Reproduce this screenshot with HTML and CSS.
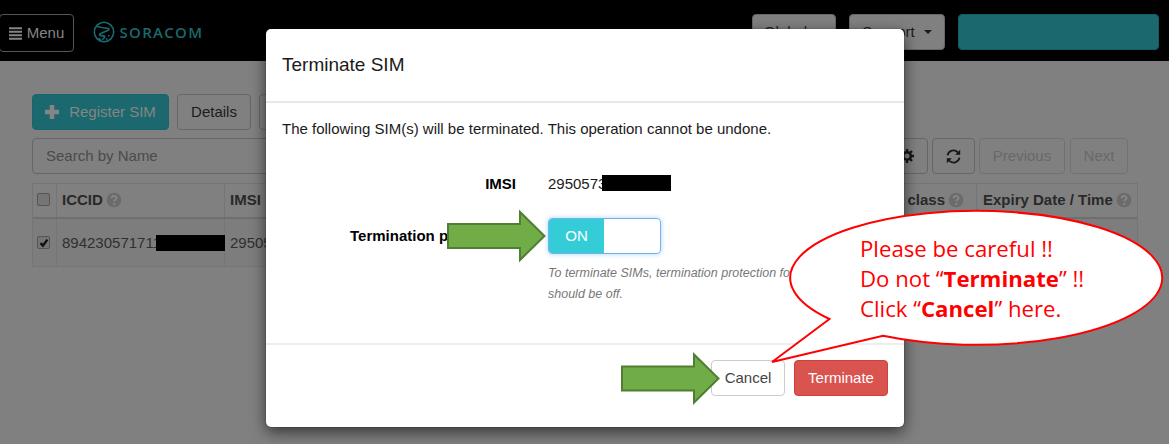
FILE: index.html
```html
<!DOCTYPE html>
<html lang="en">
<head>
<meta charset="utf-8">
<title>Terminate SIM</title>
<link rel="stylesheet" href="styles.css">
</head>
<body>
<svg class="defs" aria-hidden="true">
  <symbol id="help" viewBox="0 0 16 16"><circle cx="8" cy="8" r="7.3" fill="#6b6b6b"/><path d="M5.6 6.2C5.7 3.4 10.5 3.3 10.5 6c0 1.8-2.3 1.7-2.3 3.6M8.2 10.9v2" fill="none" stroke="#858585" stroke-width="2"/></symbol>
</svg>
<header class="topbar">
  <button class="btn menu"><svg width="13" height="13" viewBox="0 0 13 13"><path d="M0 1.200h13M0 4.700h13M0 8.200h13M0 11.700h13" stroke="#858585" stroke-width="2"/></svg><span>Menu</span></button>
  <div class="logo">
    <svg width="22" height="22" viewBox="0 0 22 22" fill="none" stroke="#1b696e" stroke-width="1.6"><circle cx="11" cy="11" r="9.7"/><path d="M4 5.500l3.500.8 7.500 1.200c1.300.3 1.300 1.200.2 1.800L7.300 12.700c-1.200.7-1 1.500.1 1.700l3.700.7c1 .3.8 1.100.1 1.700l-1.800 2M5.500 17l2.700 2.500"/><path d="M12.800 18h1.700M15 14.700h1.700"/></svg>
    <span>SORACOM</span>
  </div>
  <div class="account">
    <button class="btn global">Global <i class="caret"></i></button>
    <button class="btn support">Support <i class="caret"></i></button>
    <button class="btn user"></button>
  </div>
</header>
<main class="page">
  <div class="actions">
    <button class="btn register"><svg width="14" height="14" viewBox="0 0 14 14"><path d="M7 0v14M0 7h14" stroke="#858585" stroke-width="4.400"/></svg><span>Register SIM</span></button>
    <button class="btn details">Details</button>
    <button class="btn more"></button>
  </div>
  <div class="filters">
    <div class="search">Search by Name</div>
    <button class="btn gear"><svg width="14" height="14" viewBox="0 0 14 14" fill="none" stroke="#161616"><circle cx="7" cy="7" r="3.800" stroke-width="2.600"/><path d="M7 0v2.500M7 11.500V14M0 7h2.500M11.500 7H14M2 2l2 2M10 10l2 2M2 12l2-2M10 4l2-2" stroke-width="2.300"/></svg></button>
    <button class="btn refresh"><svg width="15" height="15" viewBox="0 0 15 15"><path d="M1.500 6.300A6 6 0 0 1 11.900 3.500M13.500 8.700A6 6 0 0 1 3.100 11.500" fill="none" stroke="#161616" stroke-width="1.700"/><path d="M14.200.7v5H9.200zM.8 14.300v-5h5z" fill="#161616"/></svg></button>
    <button class="btn previous">Previous</button>
    <button class="btn next">Next</button>
  </div>
  <div class="table">
    <div class="row head">
      <div class="cell"><span class="check"></span></div>
      <div class="cell">ICCID <svg class="help"><use href="#help"/></svg></div>
      <div class="cell">IMSI</div>
      <div class="cell right">Speed class <svg class="help"><use href="#help"/></svg></div>
      <div class="cell">Expiry Date / Time <svg class="help"><use href="#help"/></svg></div>
    </div>
    <div class="row body">
      <div class="cell"><span class="check"><svg width="12" height="12" viewBox="0 0 12 12"><path d="M2.500 6.200l2.400 2.500L9.400 2.600" fill="none" stroke="#101010" stroke-width="2.400"/></svg></span></div>
      <div class="cell iccid"><span class="digits">894230571711</span><span class="redact"></span></div>
      <div class="cell">295057</div>
      <div class="cell"></div>
      <div class="cell"></div>
    </div>
  </div>
</main>
<section class="modal">
  <h1 class="title">Terminate SIM</h1>
  <div class="content">
    <p class="warning">The following SIM(s) will be terminated. This operation cannot be undone.</p>
    <div class="field imsi"><b>IMSI</b><span class="value"><span class="digits">2950573</span><span class="redact"></span></span></div>
    <div class="field protection"><b>Termination p</b><div class="toggle"><span>ON</span></div></div>
    <p class="hint">To terminate SIMs, termination protection for<br>should be off.</p>
  </div>
  <footer class="footer"><button class="btn cancel">Cancel</button><button class="btn terminate">Terminate</button></footer>
</section>
<svg class="marks" width="1169" height="444" viewBox="0 0 1169 444">
  <g fill="#70ad47" stroke="#507e32" stroke-width="2">
    <path id="arrow" d="M448 224h72v-12l24.500 24-24.500 24v-12h-72z"/>
    <use href="#arrow" x="174" y="142.500"/>
  </g>
  <path d="M829.500 319A186 67 0 1 1 883 335.800L772 362z" fill="#fff" stroke="#f00" stroke-width="2"/>
</svg>
<div class="callout">Please be careful !!<br>Do not “<b>Terminate</b>” !!<br>Click “<b>Cancel</b>” here.</div>
</body>
</html>
```
FILE: styles.css
```css
* { box-sizing: border-box; }
body { margin: 0; width: 1169px; height: 444px; overflow: hidden; position: relative; background: #808080; color: #292929; font: 15px/24px "Liberation Sans", Arial, sans-serif; }
.defs { position: absolute; width: 0; height: 0; }
.btn { height: 36px; padding: 0; border: 1px solid #666; border-radius: 4px; background: #808080; color: #1b1b1b; font: inherit; display: flex; align-items: center; justify-content: center; flex: none; white-space: nowrap; }
.topbar { height: 61px; background: #000; display: flex; align-items: flex-start; padding: 14px 10px 0 0; }
.menu { width: 75px; height: 38px; margin-left: -1px; background: #000; border-color: #555; color: #858585; gap: 5px; }
.logo { margin: 7px 0 0 18.500px; height: 22px; display: flex; align-items: center; gap: 5px; color: #1b696e; font: 600 15px/22px "Open Sans", sans-serif; letter-spacing: 1.300px; }
.account { display: flex; margin-left: auto; gap: 13px; }
.global { width: 84px; }
.support { width: 96px; }
.user { width: 201px; background: #1b696e; border-color: #155c61; }
.caret { border: 4px solid transparent; border-top-color: #1b1b1b; border-bottom: 0; margin-left: 9px; }
.page { padding: 33px 41px 0 32px; }
.actions { display: flex; gap: 8px; }
.register { width: 137px; background: #1b696e; border-color: #18666b; color: #858585; gap: 10px; }
.details { width: 74px; }
.more { width: 90px; }
.filters { display: flex; margin-top: 8px; }
.search { width: 820px; height: 36px; border: 1.500px solid #666; border-radius: 4px; padding: 5px 13px; color: #4b4b4b; margin-right: 34px; }
.gear { width: 42px; margin-right: 4px; }
.refresh { width: 43px; margin-right: 4px; }
.previous { width: 86px; margin-right: 5px; }
.next { width: 58px; }
.previous, .next { color: #686868; border-color: #727272; }
.table { margin-top: 9px; width: 1106px; border: 1px solid #757575; }
.row { display: grid; grid-template-columns: 24px 168px 600px 152px 1fr; }
.head { height: 35px; font-weight: bold; border-bottom: 2px solid #6f6f6f; }
.head .cell { padding-bottom: 2px; }
.body { height: 47px; background: #7d7d7d; color: #303030; }
.cell { border-right: 1px solid #757575; padding-left: 5px; display: flex; align-items: center; white-space: nowrap; }
.cell:last-child { border-right: 0; padding-left: 6px; }
.cell:first-child { padding-left: 4px; }
.right { justify-content: flex-end; padding-right: 12px; }
.help { width: 16px; height: 16px; margin-left: 3px; }
.check { width: 13px; height: 13px; border: 1px solid #555; border-radius: 2px; background: #757575; display: flex; align-items: center; justify-content: center; }
.check svg { flex: none; }
.digits { flex: none; white-space: nowrap; }
.redact { width: 69px; height: 16px; background: #000; flex: none; position: relative; }
.iccid .digits { width: 94px; }
.modal { position: absolute; left: 266px; top: 29px; width: 638px; height: 398px; background: #fff; border-radius: 5px; box-shadow: 0 5px 15px rgba(0,0,0,.6), 0 0 1px #222; color: #1b1b1b; display: flex; flex-direction: column; }
.title { margin: 0; height: 74px; padding: 22px 16px; border-bottom: 2px solid #e8e8e8; font-size: 19px; line-height: 28px; font-weight: normal; }
.content { height: 242px; border-bottom: 2px solid #ededed; padding: 14px 16px 0; }
.warning { margin: 0 0 31px; }
.field { display: grid; grid-template-columns: 234px 1fr; column-gap: 32px; align-items: center; height: 24px; }
.field b { text-align: right; color: #000; }
.value { display: flex; align-items: center; }
.value .digits { width: 54px; }
.value .redact { margin-top: -2px; }
.protection { height: 36px; margin-top: 22px; }
.protection b { text-align: left; padding-left: 68px; white-space: nowrap; }
.toggle { width: 113px; height: 36px; border: 1px solid #72b2f3; border-radius: 4px; box-shadow: 0 0 5px #a9d2fa; overflow: hidden; }
.toggle span { display: flex; width: 55px; height: 34px; background: #34cdd7; color: #fff; align-items: center; justify-content: center; }
.hint { margin: 9px 0 0 266px; color: #777; font-style: italic; font-size: 12.500px; line-height: 20.500px; white-space: nowrap; }
.footer { padding: 15px 16px; display: flex; justify-content: flex-end; gap: 9px; }
.cancel { width: 74px; background: #fff; border-color: #ccc; color: #444; }
.terminate { width: 94px; background: #d9534f; border-color: #d43f3a; color: #fff; }
.marks { position: absolute; left: 0; top: 0; }
.callout { position: absolute; left: 860px; top: 234px; color: #f00; font: 22.200px/30px "Open Sans", sans-serif; white-space: nowrap; }
```
